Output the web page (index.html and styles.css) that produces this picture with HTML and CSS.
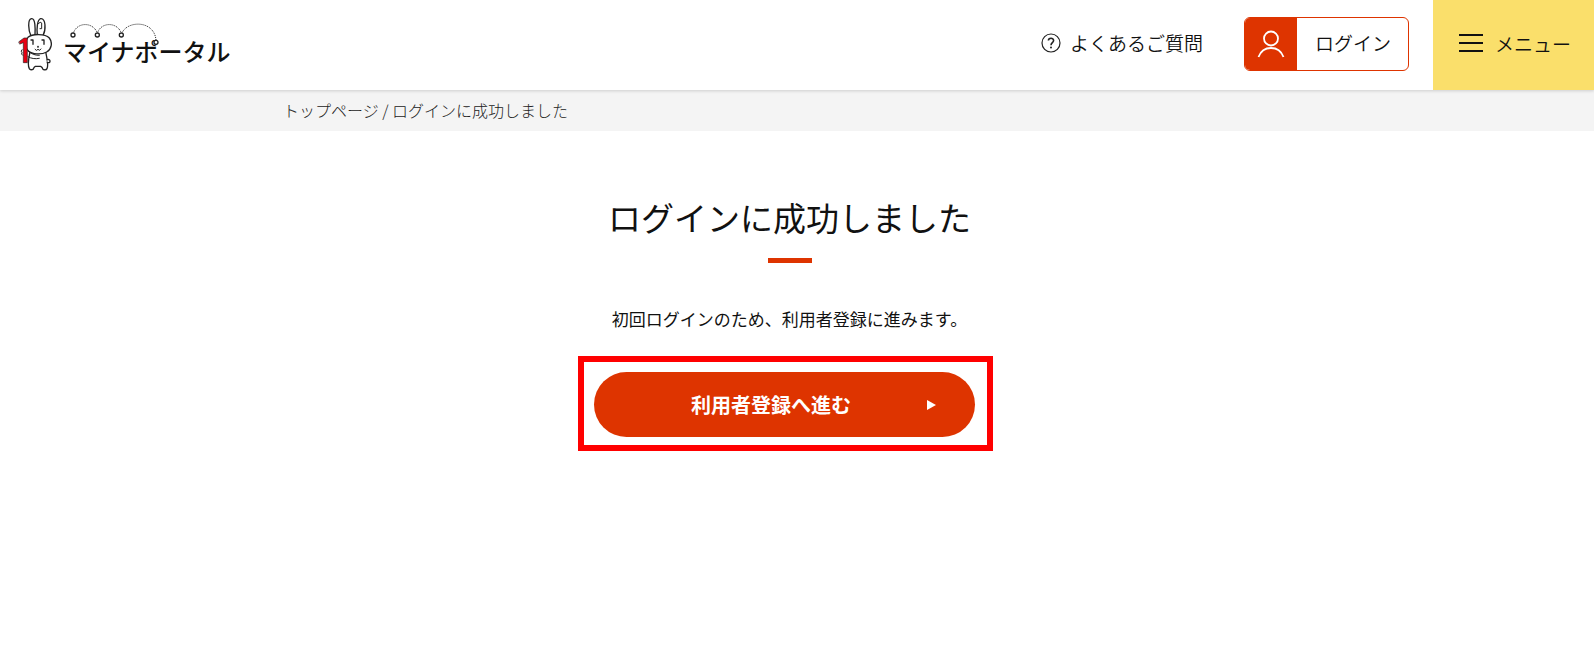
FILE: index.html
```html
<!DOCTYPE html>
<html lang="ja">
<head>
    <meta charset="UTF-8">
    <meta name="viewport" content="width=device-width, initial-scale=1.0">
    <title>マイナポータル</title>
    <link rel="stylesheet" href="styles.css">
</head>
<body>
    <header>
        <a href="#" class="logo">
            <svg class="mascot" viewBox="24 21 102 162" fill="#fff" stroke="#222" stroke-width="4" stroke-linecap="round" stroke-linejoin="round" aria-hidden="true">
                <!-- ears -->
                <path d="M63 78C55 62 52 27 65 26C76 25 76 55 75 75"/>
                <path d="M82 75C80 58 81 29 92 26C108 24 108 60 99 77"/>
                <path d="M83 43Q92 33 95 39V56H90" fill="none" stroke-width="3"/>
                <!-- body -->
                <path d="M60 126C56 145 51 164 58 176Q63 181 69 178Q73 170 76 169H92Q97 171 99 178Q108 182 111 176C117 164 110 145 107 124"/>
                <path d="M112 149Q120 147 120 154Q119 160 112 157"/>
                <!-- head -->
                <path d="M54 82C66 71 105 70 118 84C129 98 124 119 110 126C94 135 66 133 55 123C44 111 43 94 54 82Z"/>
                <path d="M63 90H69V103M96 90H102V103" fill="none"/>
                <path d="M75 118Q79 125 84 118Q89 125 93 117" fill="none" stroke-width="3"/>
                <circle cx="84" cy="110" r="1" fill="#222"/>
                <!-- number one -->
                <path d="M27 95L42 84H52V158H40V98L30 102Z" fill="#e60012" stroke-width="2"/>
                <path d="M54 122Q68 137 88 136M54 140Q68 149 88 145M36 119Q31 124 36 128Q32 132 38 136" fill="none" stroke-width="3"/>
            </svg>
            <span class="logo-name">
                <svg class="bounce" viewBox="30 39 270 66" fill="none" stroke="#222" aria-hidden="true">
                    <path d="M41 67C53 36 98 36 111 67M113 67C125 36 170 36 183 67M187 67C204 32 282 30 288 90" stroke-width="3" stroke-dasharray="3 3"/>
                    <g fill="#fff" stroke-width="4">
                        <circle cx="39" cy="75" r="6"/>
                        <circle cx="112" cy="75" r="6"/>
                        <circle cx="184" cy="75" r="6"/>
                        <circle cx="288" cy="97" r="6"/>
                    </g>
                </svg>
                マイナポータル
            </span>
        </a>

        <nav>
            <a href="#" class="faq">
                <svg width="20" height="20" viewBox="0 0 20 20" fill="none" stroke="#222" aria-hidden="true">
                    <circle cx="10" cy="10" r="9" stroke-width="1.2"/>
                    <path d="M7.4 7.6C7.5 4.4 12.6 4.4 12.6 7.5C12.6 9.5 10 9.8 10 12.2" stroke-width="1.6"/>
                    <circle cx="10" cy="14.6" r="1" fill="#222" stroke="none"/>
                </svg>
                <span>よくあるご質問</span>
            </a>
            <button type="button" class="login">
                <span class="login-icon">
                    <svg width="28" height="28" viewBox="0 0 28 28" fill="none" stroke="#fff" stroke-width="1.8" aria-hidden="true">
                        <circle cx="14" cy="8.5" r="7"/>
                        <path d="M1.5 27C6 15 22 15 26.5 27"/>
                    </svg>
                </span>
                <span class="login-text">ログイン</span>
            </button>
            <button type="button" class="menu">
                <svg width="24" height="18" viewBox="0 0 24 18" stroke="#111" stroke-width="2" aria-hidden="true">
                    <path d="M0 1H24M0 9H24M0 17H24"/>
                </svg>
                <span>メニュー</span>
            </button>
        </nav>
    </header>

    <div class="breadcrumb">
        <p><a href="#">トップページ</a> / ログインに成功しました</p>
    </div>

    <main>
        <h1>ログインに成功しました</h1>
        <p class="message">初回ログインのため、利用者登録に進みます。</p>
        <div class="action">
            <div class="highlight">
                <button type="button" class="next">
                    <span>利用者登録へ進む</span>
                    <svg width="9" height="10" viewBox="0 0 9 10" fill="#fff" aria-hidden="true">
                        <path d="M0 0L9 5L0 10Z"/>
                    </svg>
                </button>
            </div>
        </div>
    </main>
</body>
</html>
```
FILE: styles.css
```css
* {
    box-sizing: border-box;
}
body {
    margin: 0;
    font-family: 'Noto Sans CJK JP', sans-serif;
    color: #111;
    background-color: #fff;
}
a {
    color: inherit;
    text-decoration: none;
}
button {
    padding: 0;
    border: none;
    font-family: inherit;
    color: inherit;
    cursor: pointer;
}
header {
    position: relative;
    display: flex;
    justify-content: space-between;
    height: 90px;
    background: #fff;
    box-shadow: 0 1px 3px rgba(0, 0, 0, 0.16);
}
.logo {
    display: flex;
    align-items: center;
    gap: 11px;
    padding: 0 0 2px 18px;
}
.mascot {
    width: 34px;
    height: 54px;
}
.logo-name {
    position: relative;
    padding-top: 14px;
    font-size: 24px;
    font-weight: 500;
    line-height: 32px;
}
.bounce {
    position: absolute;
    top: 2px;
    left: 7px;
    width: 90px;
    height: 22px;
}
nav {
    display: flex;
    font-size: 19px;
}
.faq {
    display: flex;
    align-items: center;
    gap: 9px;
    margin-right: 41px;
    padding-bottom: 4px;
    font-weight: 350;
    line-height: 28px;
}
.login {
    display: flex;
    height: 54px;
    margin: 17px 24px 0 0;
    border: 1px solid #de3400;
    border-radius: 6px;
    background: #fff;
    font-size: 19px;
    font-weight: 350;
    overflow: hidden;
}
.login-icon {
    display: flex;
    align-items: center;
    justify-content: center;
    width: 52px;
    height: 100%;
    background: #de3400;
}
.login-text {
    padding: 0 17px 0 18px;
    line-height: 50px;
}
.menu {
    display: flex;
    align-items: center;
    gap: 12px;
    padding: 0 23px 4px 26px;
    background: #fadf6b;
    font-size: 19px;
    font-weight: 350;
}
.breadcrumb {
    padding: 8px 0 9px;
    background: #f4f4f4;
}
.breadcrumb p {
    max-width: 1028px;
    margin: 0 auto;
    font-size: 16px;
    font-weight: 300;
    line-height: 24px;
    color: #222;
}
main {
    padding: 62px 15px 64px 0;
    text-align: center;
}
h1 {
    margin: 0 0 42px;
    font-size: 33px;
    font-weight: 400;
    line-height: 48px;
}
h1::after {
    content: '';
    display: block;
    width: 44px;
    height: 5px;
    margin: 17px auto 0;
    background: #de3400;
}
.message {
    margin: 0 0 23px;
    font-size: 17px;
    font-weight: 400;
    line-height: 28px;
}
.action {
    display: flex;
    justify-content: center;
    padding-right: 8px;
}
/* red frame around the button */
.highlight {
    padding: 10px 12px 8px 10px;
    border: 6px solid #f00;
}
.next {
    display: flex;
    align-items: center;
    justify-content: flex-end;
    gap: 76px;
    width: 381px;
    height: 65px;
    padding-right: 39px;
    border-radius: 33px;
    background: #de3400;
    color: #fff;
    font-size: 20px;
    font-weight: bold;
}
```
